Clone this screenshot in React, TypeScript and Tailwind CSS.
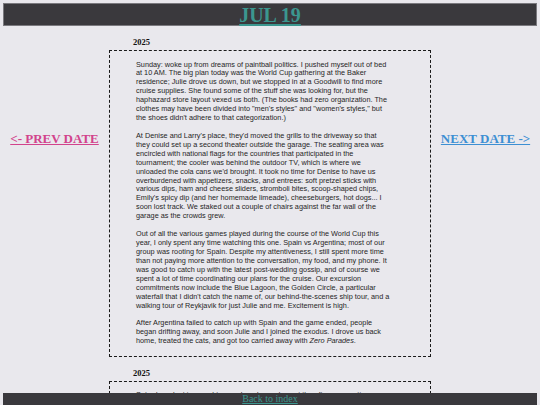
const entries = [
  {
    year: '2025',
    paragraphs: [
      <>Sunday: woke up from dreams of paintball politics. I pushed myself out of bed at 10 AM. The big plan today was the World Cup gathering at the Baker residence; Julie drove us down, but we stopped in at a Goodwill to find more cruise supplies. She found some of the stuff she was looking for, but the haphazard store layout vexed us both. (The books had zero organization. The clothes may have been divided into "men's styles" and "women's styles," but the shoes didn't adhere to that categorization.)</>,
      <>At Denise and Larry's place, they'd moved the grills to the driveway so that they could set up a second theater outside the garage. The seating area was encircled with national flags for the countries that participated in the tournament; the cooler was behind the outdoor TV, which is where we unloaded the cola cans we'd brought. It took no time for Denise to have us overburdened with appetizers, snacks, and entrees: soft pretzel sticks with various dips, ham and cheese sliders, stromboli bites, scoop-shaped chips, Emily's spicy dip (and her homemade limeade), cheeseburgers, hot dogs... I soon lost track. We staked out a couple of chairs against the far wall of the garage as the crowds grew.</>,
      <>Out of all the various games played during the course of the World Cup this year, I only spent any time watching this one. Spain vs Argentina; most of our group was rooting for Spain. Despite my attentiveness, I still spent more time than not paying more attention to the conversation, my food, and my phone. It was good to catch up with the latest post-wedding gossip, and of course we spent a lot of time coordinating our plans for the cruise. Our excursion commitments now include the Blue Lagoon, the Golden Circle, a particular waterfall that I didn't catch the name of, our behind-the-scenes ship tour, and a walking tour of Reykjavik for just Julie and me. Excitement is high.</>,
      <>After Argentina failed to catch up with Spain and the game ended, people began drifting away, and soon Julie and I joined the exodus. I drove us back home, treated the cats, and got too carried away with <em>Zero Parades</em>.</>,
    ],
  },
  {
    year: '2025',
    paragraphs: [
      <>Saturday: slept in, caught up on laundry, and spent the afternoon sorting through the travel folder. The Reykjavik maps are printed and the packing list is nearly finished.</>,
    ],
  },
];

function Entry({ year, paragraphs }: { year: string; paragraphs: React.ReactNode[] }) {
  return (
    <section className="mb-[11px]">
      <h2 className="pl-[24px] font-['Liberation_Serif',serif] text-[8.5px] leading-[10px] font-bold text-[#111] mb-[3px]">
        {year}
      </h2>
      <div className="border border-dashed border-[#1a1a1a] pl-[26px] pt-[9.5px] pb-[10px] font-['Liberation_Sans',Arial,sans-serif] text-[7.3px] leading-[8.95px] text-[#262626]">
        {paragraphs.map((p, i) => (
          <p key={i} className="w-[255px] mb-[8.6px] last:mb-0">
            {p}
          </p>
        ))}
      </div>
    </section>
  );
}

export default function App() {
  return (
    <div className="min-h-screen bg-[#e9e8ed] pt-[3px] font-['Liberation_Serif',serif]">
      <header className="mx-[3px] h-[23px] bg-[#3a393d] border border-[#7a797e] flex items-center justify-center">
        <a href="#" className="text-[20px] leading-none font-bold text-[#3b978f] underline decoration-[2px] underline-offset-[2px]">
          JUL 19
        </a>
      </header>

      <main className="flex pt-[11px]">
        <div className="flex-1 flex justify-center">
          <a href="#" className="mt-[94px] h-fit text-[13px] leading-[15px] font-bold text-[#d2438c] underline">
            &lt;- PREV DATE
          </a>
        </div>
        <div className="w-[322px]">
          {entries.map((e, i) => (
            <Entry key={i} year={e.year} paragraphs={e.paragraphs} />
          ))}
        </div>
        <div className="flex-1 flex justify-center">
          <a href="#" className="mt-[94px] h-fit text-[13px] leading-[15px] font-bold text-[#3d8fd3] underline">
            NEXT DATE -&gt;
          </a>
        </div>
      </main>

      <footer className="fixed bottom-0 left-[3px] right-[3px] h-[12px] bg-[#3a393d] flex justify-center">
        <a href="#" className="text-[10px] leading-[12px] text-[#3b978f] underline">
          Back to index
        </a>
      </footer>
    </div>
  );
}
